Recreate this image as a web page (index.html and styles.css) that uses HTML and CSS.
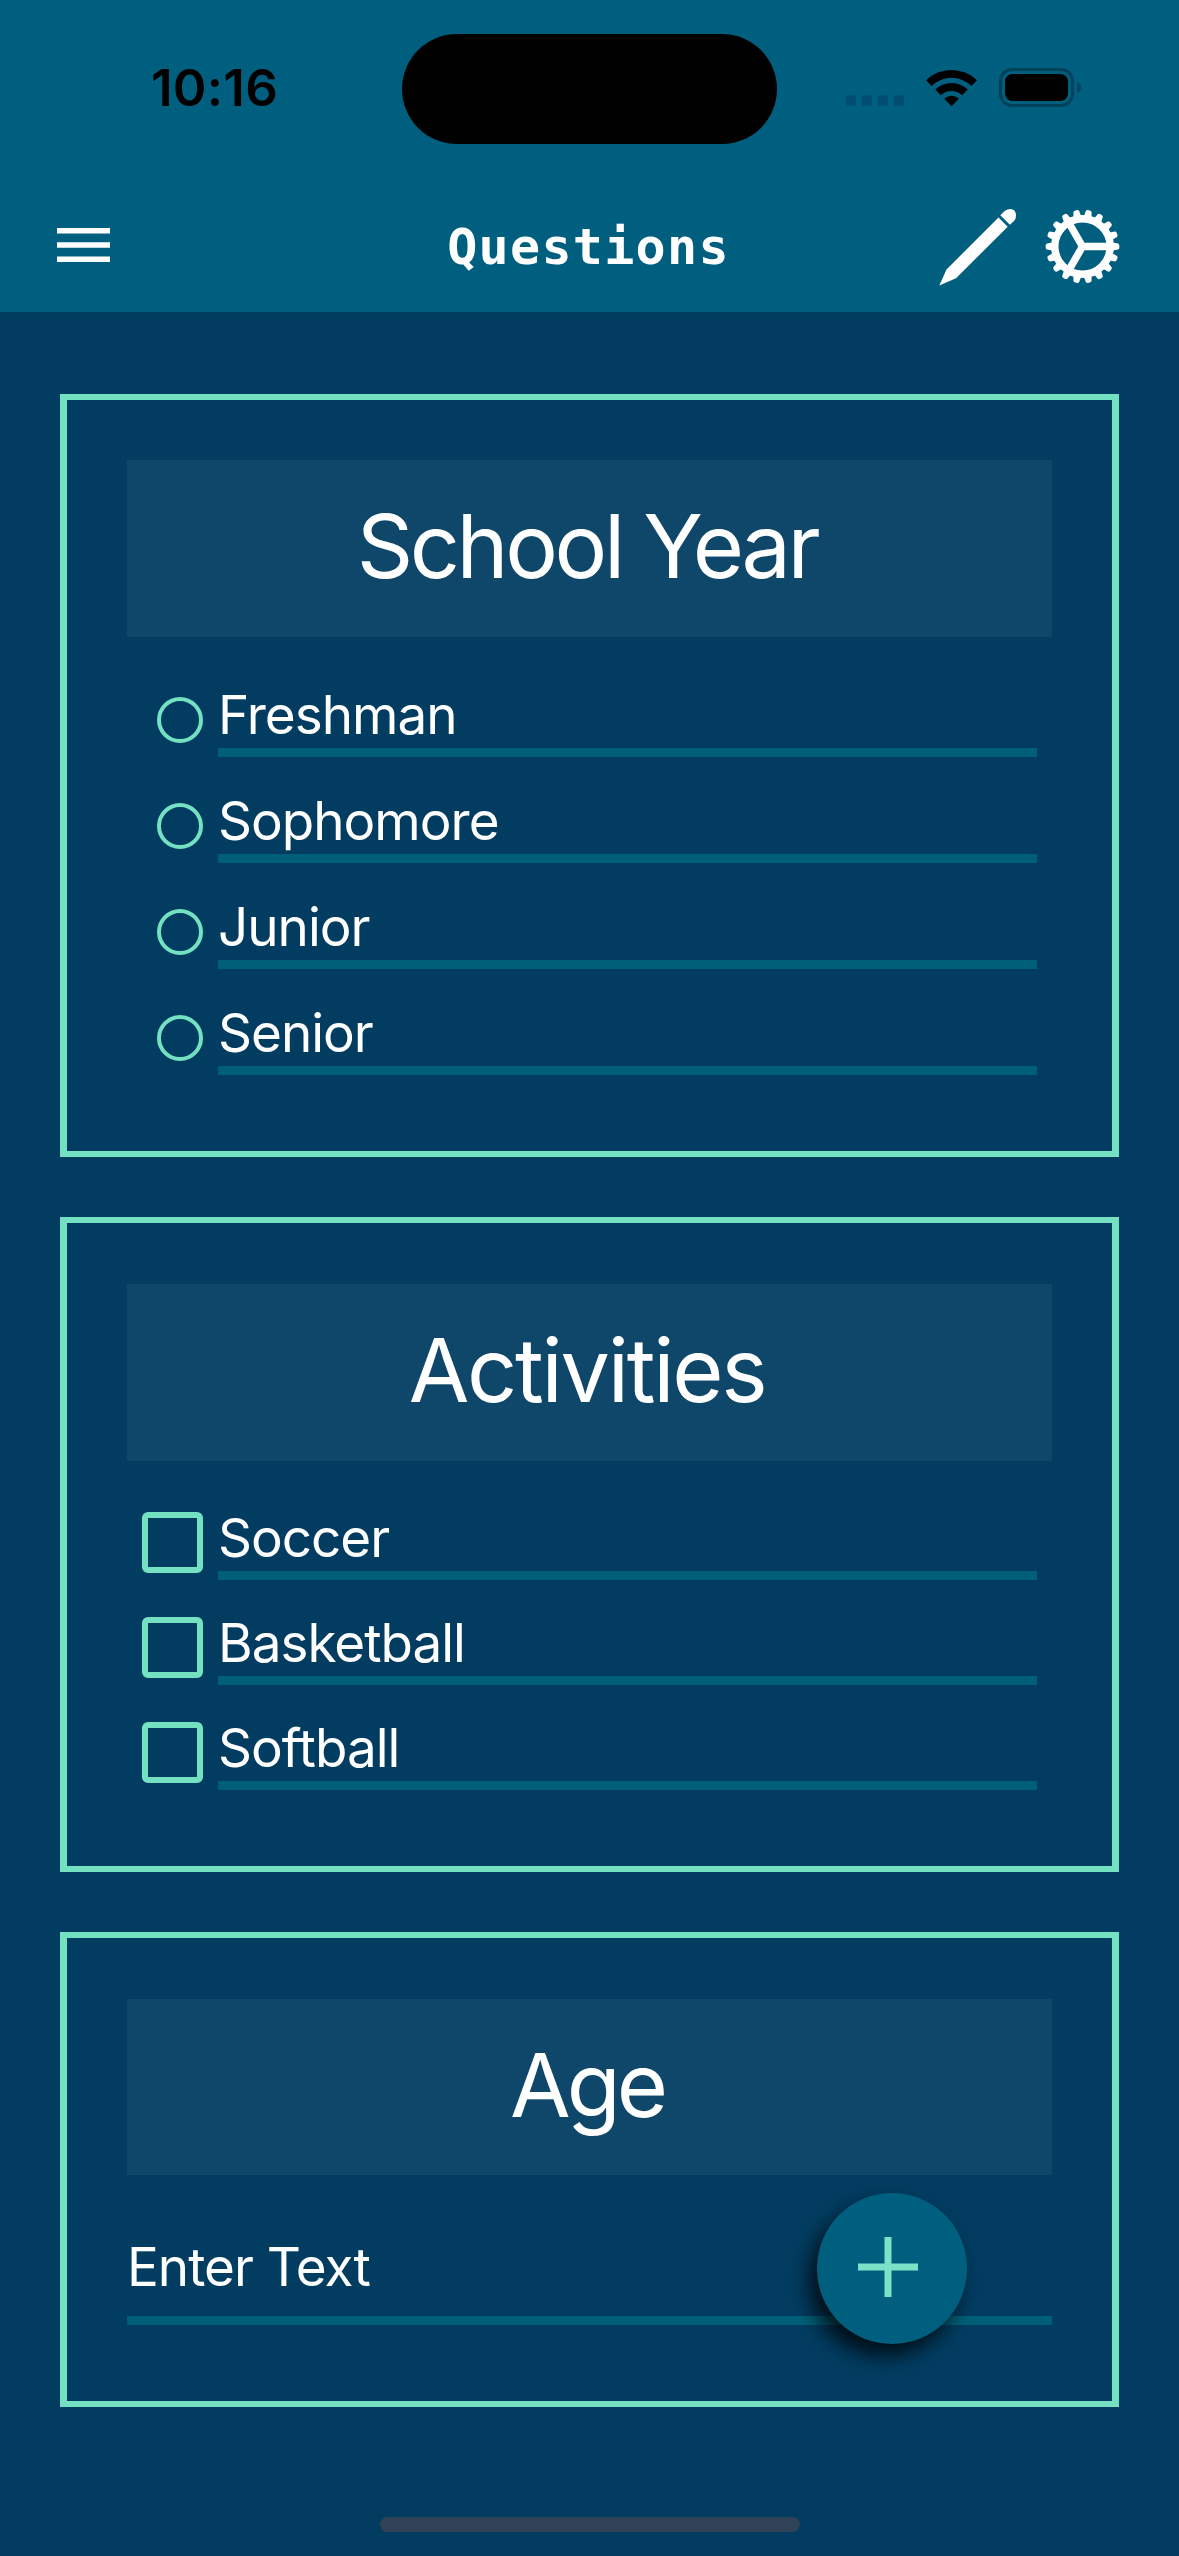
FILE: index.html
```html
<!DOCTYPE html>
<html lang="en">
<head>
<meta charset="utf-8">
<title>Questions</title>
<link rel="stylesheet" href="styles.css">
</head>
<body>
<div class="screen">
  <header class="header">
    <div class="status">
      <div class="status-side"><span class="time">10:16</span></div>
      <div class="island"></div>
      <div class="status-side status-icons">
        <div class="signal"><i></i><i></i><i></i><i></i></div>
        <svg class="wifi" width="51" height="38" viewBox="0 0 51 38">
          <path d="M0 11.3A36.5 36.5 0 0 1 51 11.3L45.4 17A28.4 28.4 0 0 0 5.6 17Z"/>
          <path d="M9.2 20.6A23.4 23.4 0 0 1 41.8 20.6L36.2 26.2A15.4 15.4 0 0 0 14.8 26.2Z"/>
          <path d="M18.2 29.8A10.5 10.5 0 0 1 32.8 29.8L25.5 37.2Z"/>
        </svg>
        <svg class="battery" width="83" height="39" viewBox="0 0 83 39">
          <rect class="battery-shell" x="1.5" y="1.5" width="72" height="36" rx="11.5"/>
          <rect x="6" y="6" width="63" height="27" rx="7.5"/>
          <path class="battery-nub" d="M78 13.5Q82 15.5 82 19.5T78 25.5Z"/>
        </svg>
      </div>
    </div>
    <nav class="toolbar">
      <svg class="menu" width="53" height="34" viewBox="0 0 53 34">
        <path d="M0 2.75H53M0 17H53M0 31.25H53"/>
      </svg>
      <h1 class="title">Questions</h1>
      <div class="actions">
        <svg width="79" height="79" viewBox="0 0 79 79">
          <path d="M.3 78.5 7.5 62.5 59.5 10.5 68.7 19.7 17 71.3Z"/>
          <path d="M61.3 8.2 65 4.6A8.5 8.5 0 0 1 75.2 3.2 8.5 8.5 0 0 1 75 14L70.9 17.8Z"/>
        </svg>
        <svg class="gear" width="75" height="75" viewBox="-37.5 -37.5 75 75">
          <circle class="gear-ring" r="27.7"/>
          <path class="gear-spokes" d="M0 0H26M0 0-13-22.5M0 0-13 22.5"/>
          <g id="half">
            <path id="tooth" d="M29-4.2 35.6-2.9Q36.9-2.6 36.9 0T35.6 2.9L29 4.2Z"/>
            <use href="#tooth" transform="rotate(20)"/>
            <use href="#tooth" transform="rotate(40)"/>
            <use href="#tooth" transform="rotate(60)"/>
            <use href="#tooth" transform="rotate(80)"/>
            <use href="#tooth" transform="rotate(100)"/>
            <use href="#tooth" transform="rotate(120)"/>
            <use href="#tooth" transform="rotate(140)"/>
            <use href="#tooth" transform="rotate(160)"/>
          </g>
          <use href="#half" transform="rotate(180)"/>
        </svg>
      </div>
    </nav>
  </header>

  <main class="cards">
    <section class="card card-radio">
      <h2 class="question">School Year</h2>
      <ul class="options">
        <li class="option"><span class="radio"></span><span class="label">Freshman</span></li>
        <li class="option"><span class="radio"></span><span class="label">Sophomore</span></li>
        <li class="option"><span class="radio"></span><span class="label">Junior</span></li>
        <li class="option"><span class="radio"></span><span class="label">Senior</span></li>
      </ul>
    </section>
    <section class="card card-check">
      <h2 class="question">Activities</h2>
      <ul class="options">
        <li class="option"><span class="checkbox"></span><span class="label">Soccer</span></li>
        <li class="option"><span class="checkbox"></span><span class="label">Basketball</span></li>
        <li class="option"><span class="checkbox"></span><span class="label">Softball</span></li>
      </ul>
    </section>
    <section class="card card-text">
      <h2 class="question">Age</h2>
      <div class="field">Enter Text</div>
    </section>
  </main>

  <div class="fab">
    <svg width="60" height="60" viewBox="0 0 60 60"><path d="M0 30H60M30 0V60"/></svg>
  </div>
  <div class="home-indicator"></div>
</div>
</body>
</html>
```

FILE: styles.css
```css
* { box-sizing: border-box; }

body {
  margin: 0;
  background: #023c60;
  color: #fff;
  font-family: Inter, "Liberation Sans", sans-serif;
}

h1, h2, ul { margin: 0; padding: 0; font-weight: 400; }
ul { list-style: none; }
svg { display: block; flex: none; }

.screen {
  position: relative;
  width: 1179px;
  height: 2556px;
  overflow: hidden;
}

/* Status bar and toolbar */
.header {
  height: 313px;
  background: #005f7f;
  border-bottom: 1px solid #00405f;
}

.status {
  display: grid;
  grid-template-columns: 402px 375px 402px;
  height: 178px;
  padding-top: 34px;
}

.status-side { height: 110px; }

.time {
  display: block;
  padding: 23px 0 0 151px;
  font-size: 51px;
  line-height: 62px;
  font-weight: 600;
  letter-spacing: 0.3px;
  color: #000;
}

.island {
  height: 110px;
  border-radius: 55px;
  background: #000;
}

.status-icons {
  display: flex;
  align-items: flex-start;
  padding: 34px 0 0 69px;
}

.signal {
  display: flex;
  gap: 6px;
  padding-top: 27px;
  margin-right: 22px;
}

.signal i {
  width: 10px;
  height: 11px;
  border-radius: 3px;
  background: #004d70;
}

.wifi { margin: 1px 22px 0 0; }

.battery-shell { fill: none; stroke: #004259; stroke-width: 3; }
.battery-nub { fill: #004466; }

.toolbar {
  display: grid;
  grid-template-columns: 1fr auto 1fr;
  align-items: center;
  height: 134px;
  padding: 0 59px 0 57px;
}

.menu { stroke: #fff; stroke-width: 5.5; }

.title {
  padding-top: 3px;
  font: 700 50px/60px "DejaVu Sans Mono", monospace;
  letter-spacing: 1.3px;
}

.actions {
  display: flex;
  justify-content: flex-end;
  align-items: center;
  gap: 27px;
  padding-top: 2px;
  fill: #fff;
}

.gear-ring { fill: none; stroke: #fff; stroke-width: 7.4; }
.gear-spokes { fill: none; stroke: #fff; stroke-width: 7.4; }

/* Question cards */
.cards {
  display: flex;
  flex-direction: column;
  gap: 60px;
  padding: 81px 60px 0;
}

.card {
  padding: 61px 60px 0;
  border: solid #74e1c3;
  border-width: 6px 7px;
}

.card-radio { height: 763px; padding-top: 60px; }
.card-check { height: 655px; }
.card-text { height: 475px; }

.question {
  height: 177px;
  padding-right: 5px;
  background: #0e4769;
  font-size: 88px;
  line-height: 172px;
  text-align: center;
}

.card-radio .question { letter-spacing: -3.4px; }
.card-check .question { letter-spacing: -2.3px; }
.card-text .question { height: 176px; letter-spacing: -4px; }

.options {
  display: flex;
  flex-direction: column;
  padding: 0 15px;
}

.card-radio .options { gap: 37px; padding-top: 51px; }
.card-check .options { gap: 36px; padding-top: 50px; }

.option {
  display: grid;
  grid-template-columns: 61px 1fr;
  column-gap: 15px;
  height: 69px;
}

.label {
  padding-bottom: 6px;
  border-bottom: 9px solid #005f78;
  font-size: 53px;
  line-height: 54px;
  letter-spacing: -1px;
}

.radio {
  width: 46px;
  height: 46px;
  margin-top: 9px;
  justify-self: end;
  border: 4px solid #74e1c3;
  border-radius: 50%;
}

.checkbox {
  width: 61px;
  height: 61px;
  margin-top: 1px;
  border: 6px solid #74e1c3;
  border-radius: 6px;
}

.field {
  padding: 61px 0 18px;
  border-bottom: 9px solid #005f78;
  font-size: 53px;
  line-height: 62px;
  letter-spacing: -1px;
}

/* Floating add button */
.fab {
  position: absolute;
  left: 817px;
  top: 2193px;
  display: flex;
  width: 150px;
  height: 151px;
  padding: 44px 0 0 41px;
  border-radius: 50%;
  background: #005f7f;
  box-shadow: -8px 12px 20px rgba(0, 0, 0, 0.75);
}

.fab svg { stroke: #7ae2c6; stroke-width: 7; }

.home-indicator {
  position: absolute;
  left: 380px;
  top: 2517px;
  width: 420px;
  height: 15px;
  border-radius: 8px;
  background: #304255;
}
```
